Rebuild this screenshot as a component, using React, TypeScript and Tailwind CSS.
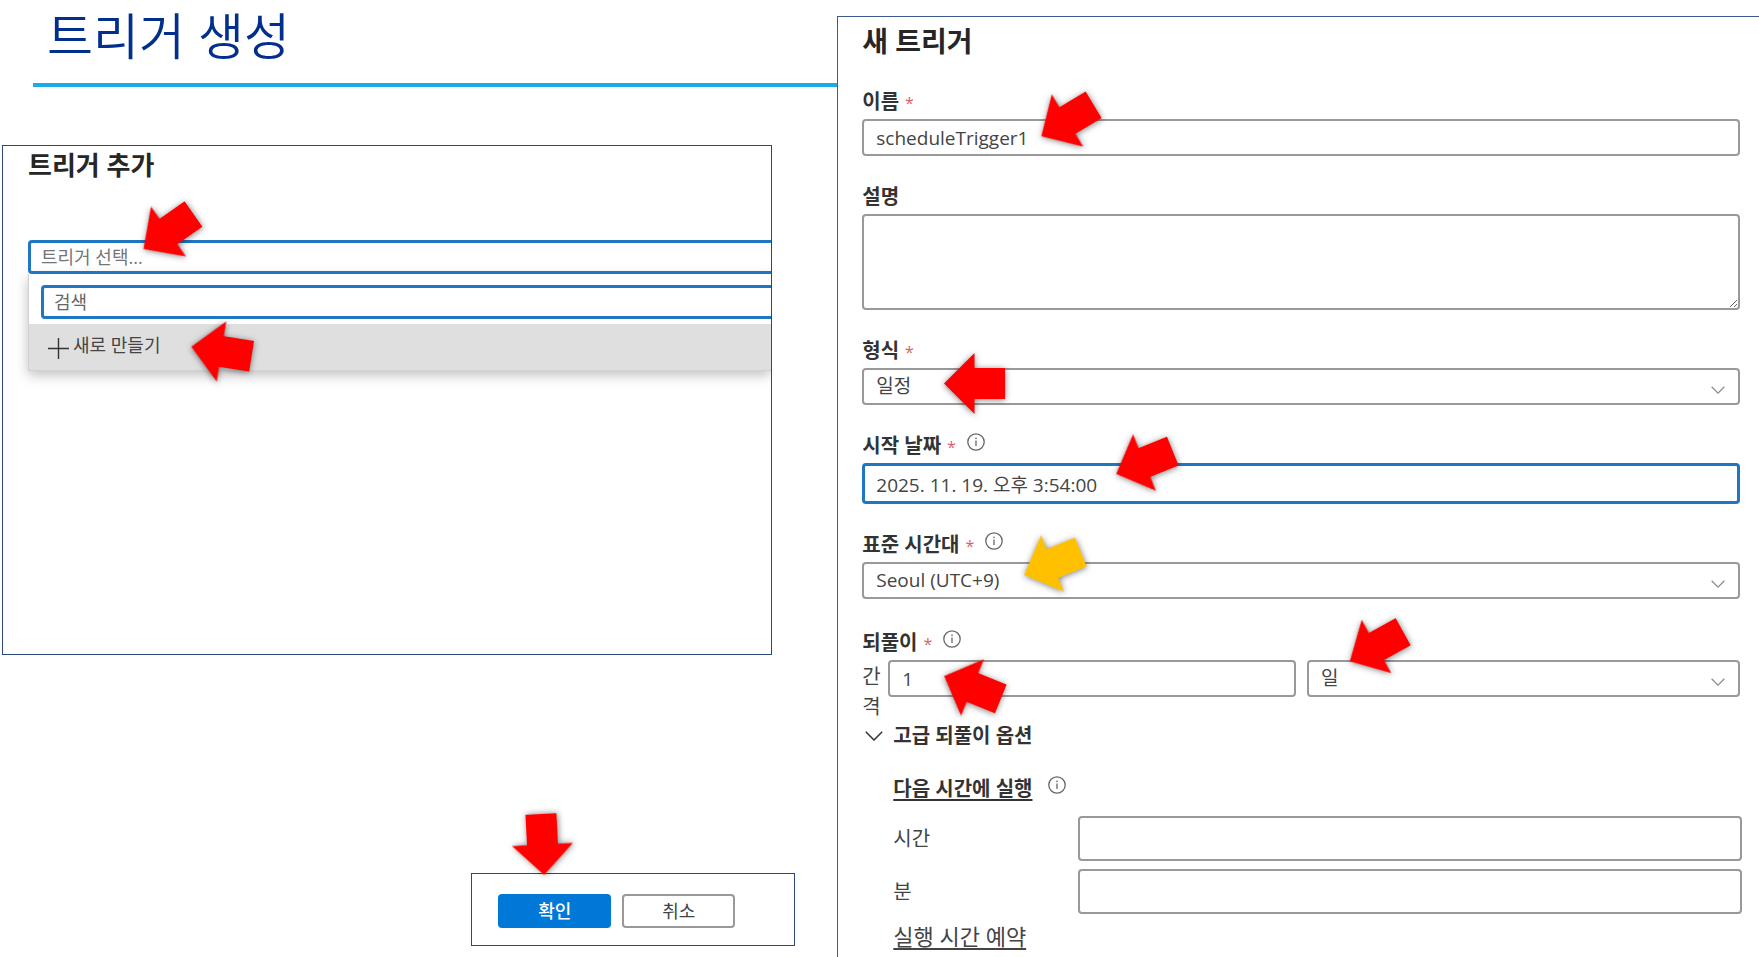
import type { ReactNode } from "react";
import { clsx } from "clsx";

const fieldBase =
  "w-full rounded-sm border-2 border-[#999999] bg-white px-3 text-[19px] text-[#444444] outline-none";

function Arrow({ className, color = "#ff0000" }: { className: string; color?: string }) {
  return (
    <svg
      aria-hidden="true"
      viewBox="0 0 61 61"
      className={clsx(
        "pointer-events-none absolute z-10 size-[61px] overflow-visible drop-shadow-[0_1px_3px_rgba(0,0,0,0.5)]",
        className
      )}
    >
      <path d="M0 30.5 30.5 0V15H61V46H30.5V61Z" fill={color} />
    </svg>
  );
}

function InfoIcon({ className }: { className?: string }) {
  return (
    <svg viewBox="0 0 18 18" aria-hidden="true" className={clsx("size-[18px] shrink-0", className)}>
      <circle cx="9" cy="9" r="8.2" fill="none" stroke="#666666" strokeWidth="1.3" />
      <path d="M9 7.6V13" stroke="#666666" strokeWidth="1.3" />
      <circle cx="9" cy="5.4" r="0.8" fill="#666666" />
    </svg>
  );
}

function Chevron({ className }: { className: string }) {
  return (
    <svg viewBox="0 0 18 10" fill="none" aria-hidden="true" className={className}>
      <path d="M0.8 0.8 9 9 17.2 0.8" stroke="currentColor" strokeWidth="1.5" />
    </svg>
  );
}

type FieldProps = {
  id: string;
  label: string;
  required?: boolean;
  info?: boolean;
  className?: string;
  children: ReactNode;
};

function Field({ id, label, required, info, className, children }: FieldProps) {
  return (
    <div className={className}>
      <div className="mb-0.5 flex h-[30px] items-center">
        <label htmlFor={id} className="text-xl leading-7 font-bold text-[#333333]">
          {label}
          {required && <span className="ml-[6px] text-base font-normal text-[#dc5f68]">*</span>}
        </label>
        {info && <InfoIcon className="mb-2 ml-[11px]" />}
      </div>
      <div className="relative">{children}</div>
    </div>
  );
}

function Select({ id, value, label }: { id: string; value: string; label?: string }) {
  return (
    <>
      <select id={id} aria-label={label} className={clsx(fieldBase, "h-[37px] appearance-none")}>
        <option>{value}</option>
      </select>
      <Chevron className="pointer-events-none absolute top-[18px] right-[15px] h-2 w-[14px] text-[#8a8a8a]" />
    </>
  );
}

function AddTriggerPanel() {
  return (
    <section className="mr-[65px] ml-0.5 min-h-[510px] overflow-hidden border border-[#2b477f] pl-[25px]">
      <h2 className="mb-14 text-[26px] leading-[38px] font-bold text-[#262626]">트리거 추가</h2>
      <div className="relative">
        <input
          aria-label="트리거 선택"
          placeholder="트리거 선택..."
          className="block h-[34px] w-full rounded-l-sm border-3 border-r-0 border-[#1f77c4] pl-[10px] text-lg outline-none placeholder:text-[#757575]"
        />
        <Arrow className="-top-[39px] left-[110px] -rotate-35" />
      </div>
      <div className="border-b border-l border-[#d2d2d2] shadow-[0_4px_12px_rgba(0,0,0,0.25)]">
        <div className="bg-white pt-[11px] pb-[5px] pl-3">
          <input
            aria-label="검색"
            placeholder="검색"
            className="block h-[34px] w-full rounded-l-sm border-3 border-r-0 border-[#1f77c4] pl-[10px] text-lg outline-none placeholder:text-[#666666]"
          />
        </div>
        <div className="relative">
          <button
            type="button"
            className="flex h-[46px] w-full items-center gap-1 bg-[#dfdfdf] pl-[19px] text-lg text-[#444444]"
          >
            <svg viewBox="0 0 21 21" aria-hidden="true" className="mt-0.5 size-[21px]">
              <path d="M10.5 0V21M0 10.5H21" stroke="#333333" strokeWidth="1.4" />
            </svg>
            <span className="pb-1">새로 만들기</span>
          </button>
          <Arrow className="-top-[3px] left-[162px] rotate-9" />
        </div>
      </div>
    </section>
  );
}

function DialogButtons() {
  return (
    <div className="relative mt-[218px] mr-[42px] flex w-[324px] gap-[11px] self-end border border-[#2b477f] pt-5 pb-[17px] pl-[26px]">
      <Arrow className="-top-[60px] left-10 -rotate-93" />
      <button type="button" className="h-[34px] w-[113px] rounded-sm bg-[#0078d7] text-lg font-medium text-white">
        확인
      </button>
      <button
        type="button"
        className="h-[34px] w-[113px] rounded-sm border-2 border-[#999999] bg-white text-lg text-[#444444]"
      >
        취소
      </button>
    </div>
  );
}

function NewTriggerPanel() {
  return (
    <section className="mt-4 border-t border-l border-[#3d5a92] pr-[19px] pl-6">
      <h2 className="mb-[22px] text-[28px] leading-[48px] font-bold text-[#262626]">새 트리거</h2>

      <div className="flex flex-col gap-[26px]">
        <Field id="name" label="이름" required>
          <input id="name" defaultValue="scheduleTrigger1" className={clsx(fieldBase, "block h-[37px]")} />
          <Arrow className="-top-[29px] left-[175px] -rotate-31" />
        </Field>

        <Field id="description" label="설명">
          <textarea id="description" className={clsx(fieldBase, "block h-24 resize-y")} />
        </Field>

        <Field id="type" label="형식" required>
          <Select id="type" value="일정" />
          <Arrow className="-top-[15px] left-[82px]" />
        </Field>

        <Field id="start" label="시작 날짜" required info>
          <input
            id="start"
            defaultValue="2025. 11. 19. 오후 3:54:00"
            className="block h-[41px] w-full rounded-sm border-3 border-[#1f77c4] px-[11px] text-[19px] text-[#444444] outline-none"
          />
          <Arrow className="-top-[31px] left-[252px] -rotate-22" />
        </Field>

        <Field id="timezone" label="표준 시간대" required info>
          <Select id="timezone" value="Seoul (UTC+9)" />
          <Arrow className="-top-[29px] left-[160px] -rotate-22" color="#ffc000" />
        </Field>

        <Field id="interval" label="되풀이" required info className="mt-[3px]">
          <div className="flex items-start">
            <label htmlFor="interval" className="mr-[6px] w-5 pt-0.5 text-xl leading-[30px] text-[#444444]">
              간격
            </label>
            <div className="relative mr-[11px] min-w-0 flex-[16]">
              <input id="interval" defaultValue="1" className={clsx(fieldBase, "block h-[37px]")} />
              <Arrow className="-top-[3px] left-[54px] rotate-22" />
            </div>
            <div className="relative min-w-0 flex-[17]">
              <Select id="unit" value="일" label="단위" />
              <Arrow className="-top-11 left-[39px] -rotate-29" />
            </div>
          </div>
        </Field>
      </div>

      <button type="button" className="flex h-7 items-center gap-[10px] pl-[3px] text-xl font-bold text-[#333333]">
        <Chevron className="h-[10px] w-[18px]" />
        고급 되풀이 옵션
      </button>

      <div className="-mr-0.5 pt-6 pl-[31px] text-xl text-[#444444]">
        <div className="mb-3 flex h-[30px] items-center gap-4">
          <h3 className="font-bold text-[#333333] underline underline-offset-3">다음 시간에 실행</h3>
          <InfoIcon className="mb-2" />
        </div>
        <div className="flex flex-col gap-2">
          <div className="flex items-center">
            <label htmlFor="hours" className="w-[185px]">
              시간
            </label>
            <input id="hours" className={clsx(fieldBase, "h-[45px] flex-1")} />
          </div>
          <div className="flex items-center">
            <label htmlFor="minutes" className="w-[185px]">
              분
            </label>
            <input id="minutes" className={clsx(fieldBase, "h-[45px] flex-1")} />
          </div>
        </div>
        <h3 className="mt-[7px] text-[22px] leading-[30px] underline underline-offset-3">실행 시간 예약</h3>
      </div>
    </section>
  );
}

export default function App() {
  return (
    <main className="grid min-h-screen grid-cols-[47.6%_1fr] bg-white font-['Open_Sans','Noto_Sans_CJK_KR',sans-serif]">
      <div className="flex flex-col">
        <h1 className="pt-1 pl-[47px] text-[50px] leading-[64px] font-[350] text-[#002f8e]">트리거 생성</h1>
        <div className="mt-[15px] mb-[58px] ml-[33px] h-1 bg-[#1eaae7]" />
        <AddTriggerPanel />
        <DialogButtons />
      </div>
      <NewTriggerPanel />
    </main>
  );
}
